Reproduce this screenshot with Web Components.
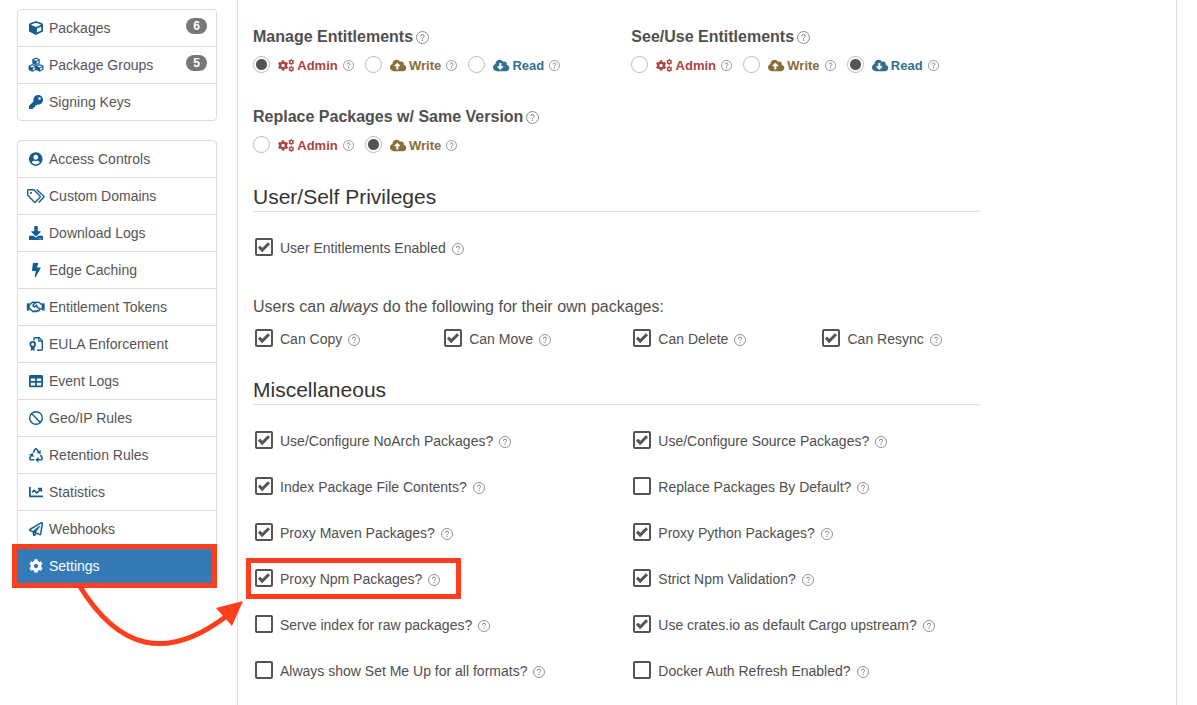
<!DOCTYPE html>
<html lang="en">
<head>
<meta charset="utf-8">
<title>Repository Settings</title>
<style>
  body { margin: 0; background: #fff; color: #4f4f4f; font-family: "Liberation Sans", Arial, sans-serif; font-size: 14px; }
</style>
</head>
<body>
<settings-page>
  <nav-group slot="sidebar">
    <nav-item icon="cube" badge="6">Packages</nav-item>
    <nav-item icon="cubes" badge="5">Package Groups</nav-item>
    <nav-item icon="key">Signing Keys</nav-item>
  </nav-group>
  <nav-group slot="sidebar">
    <nav-item icon="user">Access Controls</nav-item>
    <nav-item icon="tags">Custom Domains</nav-item>
    <nav-item icon="download">Download Logs</nav-item>
    <nav-item icon="bolt">Edge Caching</nav-item>
    <nav-item icon="handshake">Entitlement Tokens</nav-item>
    <nav-item icon="certificate">EULA Enforcement</nav-item>
    <nav-item icon="table">Event Logs</nav-item>
    <nav-item icon="ban">Geo/IP Rules</nav-item>
    <nav-item icon="recycle">Retention Rules</nav-item>
    <nav-item icon="chart">Statistics</nav-item>
    <nav-item icon="plane">Webhooks</nav-item>
    <nav-item icon="cog" active>Settings</nav-item>
  </nav-group>

  <form-grid cols="2" class="roles">
    <role-field name="manage" roles="admin write read" value="admin">Manage Entitlements</role-field>
    <role-field name="use" roles="admin write read" value="read">See/Use Entitlements</role-field>
    <role-field name="replace" roles="admin write" value="write">Replace Packages w/ Same Version</role-field>
  </form-grid>

  <form-section>
    <span slot="title">User/Self Privileges</span>
    <check-field checked>User Entitlements Enabled</check-field>
    <p slot="note">Users can <em>always</em> do the following for their own packages:</p>
    <form-grid cols="4" slot="more">
      <check-field checked>Can Copy</check-field>
      <check-field checked>Can Move</check-field>
      <check-field checked>Can Delete</check-field>
      <check-field checked>Can Resync</check-field>
    </form-grid>
  </form-section>

  <form-section>
    <span slot="title">Miscellaneous</span>
    <form-grid cols="2">
      <check-field checked>Use/Configure NoArch Packages?</check-field>
      <check-field checked>Use/Configure Source Packages?</check-field>
      <check-field checked>Index Package File Contents?</check-field>
      <check-field>Replace Packages By Default?</check-field>
      <check-field checked>Proxy Maven Packages?</check-field>
      <check-field checked>Proxy Python Packages?</check-field>
      <check-field checked marked>Proxy Npm Packages?</check-field>
      <check-field checked>Strict Npm Validation?</check-field>
      <check-field>Serve index for raw packages?</check-field>
      <check-field checked>Use crates.io as default Cargo upstream?</check-field>
      <check-field>Always show Set Me Up for all formats?</check-field>
      <check-field>Docker Auth Refresh Enabled?</check-field>
    </form-grid>
  </form-section>
</settings-page>

<script>
const CUBE = 'M239.1 6.3l-208 78c-18.7 7-31.1 25-31.1 45v225.1c0 18.2 10.3 34.8 26.5 42.9l208 104c13.5 6.8 29.4 6.8 42.9 0l208-104c16.3-8.1 26.5-24.8 26.5-42.9V129.3c0-20-12.4-37.9-31.1-44.9l-208-78C262 2.2 250 2.2 239.1 6.3zM256 68.4l192 72v1.1l-192 78-192-78v-1.1l192-72zm32 356V275.5l160-65v133.9l-160 80z';
const COG = 'M487.4 315.7l-42.6-24.6c4.3-23.2 4.3-47 0-70.2l42.6-24.6c4.9-2.8 7.1-8.6 5.5-14-11.1-35.6-30-67.8-54.7-94.6-3.8-4.1-10-5.1-14.8-2.3L380.8 110c-17.9-15.4-38.5-27.3-60.8-35.1V25.8c0-5.6-3.9-10.5-9.4-11.7-36.7-8.2-74.3-7.8-109.2 0-5.5 1.2-9.4 6.1-9.4 11.7V75c-22.2 7.9-42.8 19.8-60.8 35.1L88.7 85.5c-4.9-2.8-11-1.9-14.8 2.3-24.7 26.7-43.6 58.9-54.7 94.6-1.7 5.4.6 11.2 5.5 14L67.3 221c-4.3 23.2-4.3 47 0 70.2l-42.6 24.6c-4.9 2.8-7.1 8.6-5.5 14 11.1 35.6 30 67.8 54.7 94.6 3.8 4.1 10 5.1 14.8 2.3l42.6-24.6c17.9 15.4 38.5 27.3 60.8 35.1v49.2c0 5.6 3.9 10.5 9.4 11.7 36.7 8.2 74.3 7.8 109.2 0 5.5-1.2 9.4-6.1 9.4-11.7v-49.2c22.2-7.9 42.8-19.8 60.8-35.1l42.6 24.6c4.9 2.8 11 1.9 14.8-2.3 24.7-26.7 43.6-58.9 54.7-94.6 1.5-5.5-.7-11.3-5.6-14.1zM256 336c-44.1 0-80-35.9-80-80s35.9-80 80-80 80 35.9 80 80-35.9 80-80 80z';
const CLOUD = 'M537.6 226.6c4.1-10.7 6.4-22.4 6.4-34.6 0-53-43-96-96-96-19.7 0-38.1 6-53.3 16.2C367 64.2 315.3 32 256 32c-88.4 0-160 71.6-160 160 0 2.7.1 5.4.2 8.1C40.2 219.8 0 273.2 0 336c0 79.5 64.5 144 144 144h368c70.7 0 128-57.3 128-128 0-61.9-44-113.6-102.4-125.4z';
const p = d => `<path d="${d}"/>`;
const line = (d, w) => `<path d="${d}" fill="none" stroke="currentColor" stroke-width="${w}" stroke-linejoin="round"/>`;

/* name: [viewBox width, viewBox height, markup] */
const ICONS = {
  cube: [512, 512, p(CUBE)],
  cubes: [512, 512, `<g stroke="currentColor" stroke-width="14"><g transform="translate(122 -8) scale(.53)">${p(CUBE)}</g><g transform="translate(-12 228) scale(.53)">${p(CUBE)}</g><g transform="translate(254 228) scale(.53)">${p(CUBE)}</g></g>`],
  key: [512, 512, p('M512 176C512 273.2 433.2 352 336 352c-11.2 0-22.2-1-32.8-3l-24 27a24 24 0 0 1-18 8H224v40c0 13.3-10.7 24-24 24h-40v40c0 13.3-10.7 24-24 24H24c-13.3 0-24-10.7-24-24v-78c0-6.4 2.5-12.5 7-17l161.8-161.8C163.1 213.8 160 195.3 160 176 160 78.8 238.8 0 336 0 433.5 0 512 78.5 512 176zM336 128c0 26.5 21.5 48 48 48s48-21.5 48-48-21.5-48-48-48-48 21.5-48 48z')],
  user: [496, 512, p('M248 8C111 8 0 119 0 256s111 248 248 248 248-111 248-248S385 8 248 8zm0 96c48.6 0 88 39.4 88 88s-39.4 88-88 88-88-39.4-88-88 39.4-88 88-88zm0 344c-58.7 0-111.3-26.6-146.5-68.2 18.8-35.4 55.6-59.8 98.5-59.8 2.4 0 4.8.4 7.1 1.1 13 4.2 26.6 6.9 40.9 6.9 14.3 0 28-2.7 40.9-6.9 2.3-.7 4.7-1.1 7.1-1.1 42.9 0 79.7 24.4 98.5 59.8C359.3 421.4 306.7 448 248 448z')],
  tags: [18, 14, line('M.7 1.7V6L7.2 12.9q.6.6 1.2 0L13 8.2q.6-.6 0-1.2L6.8.7H1.7q-1 0-1 1z', 1.4) + line('M9.6.4L16.7 7q.6.6 0 1.2l-5 5.3', 1.4) + '<circle cx="4" cy="4" r="1.1"/>'],
  download: [512, 512, p('M216 0h80c13.3 0 24 10.7 24 24v168h87.7c17.8 0 26.7 21.5 14.1 34.1L269.7 378.3c-7.5 7.5-19.8 7.5-27.3 0L90.1 226.1c-12.6-12.6-3.7-34.1 14.1-34.1H192V24c0-13.3 10.7-24 24-24zm296 376v112c0 13.3-10.7 24-24 24H24c-13.3 0-24-10.7-24-24V376c0-13.3 10.7-24 24-24h146.7l49 49c20.1 20.1 52.5 20.1 72.6 0l49-49H488c13.3 0 24 10.7 24 24zm-124 88c0-11-9-20-20-20s-20 9-20 20 9 20 20 20 20-9 20-20zm64 0c0-11-9-20-20-20s-20 9-20 20 9 20 20 20 20-9 20-20z')],
  bolt: [320, 512, p('M296 160H180.6l42.6-129.8C227.2 15 215.7 0 200 0H56C44 0 33.8 8.9 32.2 20.8l-32 240C-1.7 275.2 9.5 288 24 288h118.7L96.6 482.5c-3.6 15.2 8 29.5 23.3 29.5 8.4 0 16.4-4.4 20.8-12l176-304c9.3-15.9-2.2-36-20.7-36z')],
  handshake: [640, 512, `<g stroke="currentColor" stroke-width="10">${p('M519.2 127.9l-47.6-47.6A56.3 56.3 0 0 0 432 64H205.2c-14.8 0-29.1 5.9-39.6 16.3L118 127.9H0v255.7h64c17.6 0 31.8-14.2 31.9-31.7h9.1l84.6 76.4c30.9 25.1 73.8 25.7 105.6 3.8 12.5 10.8 26 15.9 41.1 15.9 18.2 0 35.3-7.4 48.8-24 22.1 8.7 48.2 2.6 64-16.8l26.2-32.3c5.6-6.9 9.1-14.8 10.9-23h57.9c.1 17.5 14.4 31.7 31.9 31.7h64V127.9H519.2zM48 351.6c-8.8 0-16-7.2-16-16s7.2-16 16-16 16 7.2 16 16c0 8.9-7.2 16-16 16zm390-6.9l-26.1 32.2c-2.8 3.4-7.8 4-11.3 1.2l-23.9-19.4-30 36.5c-6 7.3-15 4.8-18 2.4l-36.8-31.5-15.6 19.2c-13.9 17.1-39.2 19.7-55.3 6.6l-97.3-88H96V175.8h41.9l61.7-61.6c2-.8 3.7-1.5 5.7-2.3H262l-38.7 35.5c-29.4 26.9-31.1 72.3-4.4 101.3 14.8 16.2 61.2 41.2 101.5 4.4l8.2-7.5 108.2 87.8c3.4 2.8 3.9 7.9 1.2 11.3zm106-40.8h-69.2c-2.3-2.8-4.9-5.4-7.7-7.7l-102.7-83.4 12.5-11.4c6.5-6 7-16.1 1-22.6L367 167.1c-6-6.5-16.1-6.9-22.6-1l-55.2 50.6c-9.5 8.7-25.7 9.4-34.6 0-9.3-9.9-8.5-25.1 1.2-33.9l65.6-60.2c7.4-6.8 17-10.5 27-10.5l83.7-.2c2.1 0 4.1.8 5.5 2.3l61.7 61.6H544v128zm48 47.7c-8.8 0-16-7.2-16-16s7.2-16 16-16 16 7.2 16 16c0 8.9-7.2 16-16 16z')}</g>`],
  certificate: [14, 14, line('M5 3.4V1.7q0-1 1-1h4l3.3 3.3v8.3q0 1-1 1H8', 1.4) + line('M9.7.7v3.5h3.6', 1.2) + line('M6.1 7.3a2.4 2.4 0 1 1-4.8 0a2.4 2.4 0 1 1 4.8 0z', 1.8) + p('M1.9 9.6h3.6V14l-1.8-1-1.8 1z')],
  table: [512, 512, p('M464 32H48C21.5 32 0 53.5 0 80v352c0 26.5 21.5 48 48 48h416c26.5 0 48-21.5 48-48V80c0-26.5-21.5-48-48-48zM224 416H64v-96h160v96zm0-160H64v-96h160v96zm224 160H288v-96h160v96zm0-160H288v-96h160v96z')],
  ban: [14, 14, line('M13.3 7A6.3 6.3 0 1 1 .7 7a6.3 6.3 0 1 1 12.6 0zM2.6 2.6l8.8 8.8', 1.4)],
  recycle: [14, 14, line('M4.2 4.6L6 1.4q1-1.3 2 0L9.8 4.4', 1.6) + p('M11.7 1.9v4.2L7.7 5z') + line('M11.4 7l1.6 2.6q.6 2-1.2 2.2H9', 1.6) + p('M9.5 8.9v5.6L6.3 11.7z') + line('M5.4 11.8H2.2Q.3 11.6 1 9.6l1.5-2.5', 1.6) + p('M-.2 6.5L3.9 5.3l1 3.9z')],
  chart: [512, 512, p('M496 384H64V80c0-8.8-7.2-16-16-16H16C7.2 64 0 71.2 0 80v336c0 17.7 14.3 32 32 32h464c8.8 0 16-7.2 16-16v-32c0-8.8-7.2-16-16-16zM464 96H345.9c-21.4 0-32.1 25.9-17 41l32.4 32.4L288 242.8l-73.4-73.4c-12.5-12.5-32.8-12.5-45.2 0l-68.7 68.7c-6.3 6.2-6.3 16.4 0 22.6l22.6 22.6c6.3 6.3 16.4 6.3 22.6 0L192 237.3l73.4 73.4c12.5 12.5 32.8 12.5 45.2 0l96-96 32.4 32.4c15.1 15.1 41 4.4 41-17V112c0-8.8-7.2-16-16-16z')],
  plane: [512, 512, `<g stroke="currentColor" stroke-width="10">${p('M440 6.5L24 246.4c-34.4 19.9-31.1 70.8 5.7 85.9L144 379.6V464c0 46.4 59.2 65.5 86.6 28.6l43.8-59.1 111.9 46.2c5.9 2.4 12.1 3.6 18.3 3.6 8.2 0 16.3-2.1 23.6-6.2 12.8-7.2 21.6-20 23.9-34.5l59.4-387.2c6.1-40.1-36.9-68.8-71.5-48.9zM192 464v-64.6l36.6 15.1L192 464zm212.6-28.7l-153.8-63.5L391 169.5c10.7-15.5-9.5-33.5-23.7-21.2L155.8 332.6 48 288 464 48l-59.4 387.3z')}</g>`],
  cog: [512, 512, p(COG)],
  cogs: [640, 512, `<g transform="translate(-10 46) scale(.82)">${p(COG)}</g><g transform="translate(404 0) scale(.46)">${p(COG)}</g><g transform="translate(404 276) scale(.46)">${p(COG)}</g>`],
  upload: [640, 512, `<path fill-rule="evenodd" d="${CLOUD}M393.4 288H328v112c0 8.8-7.2 16-16 16h-48c-8.8 0-16-7.2-16-16V288h-65.4c-14.3 0-21.4-17.2-11.3-27.3l105.4-105.4c6.2-6.2 16.4-6.2 22.6 0l105.4 105.4c10.1 10.1 2.9 27.3-11.3 27.3z"/>`],
  clouddown: [640, 512, `<path fill-rule="evenodd" d="${CLOUD}M404.7 315.3L299.3 420.7c-6.2 6.2-16.4 6.2-22.6 0L171.3 315.3c-10.1-10.1-2.9-27.3 11.3-27.3H248V176c0-8.8 7.2-16 16-16h48c8.8 0 16 7.2 16 16v112h65.4c14.2 0 21.4 17.2 11.3 27.3z"/>`],
  help: [12, 12, line('M11.5 6A5.5 5.5 0 1 1 .5 6a5.5 5.5 0 1 1 11 0z', .8) + line('M4.4 4.8q0-1.6 1.6-1.6t1.6 1.4q0 .8-.8 1.3t-.8 1.3', .9) + '<circle cx="6" cy="8.6" r=".65"/>']
};

function define(name, render) {
  customElements.define(name, class extends HTMLElement {
    connectedCallback() {
      if (this.shadowRoot) return;
      this.attachShadow({ mode: 'open' }).innerHTML = render(this);
    }
  });
}

define('ui-icon', el => {
  const [w, h, body] = ICONS[el.getAttribute('name')];
  return `<style>
    :host { display: inline-flex; flex: none; height: 14px; justify-content: center; }
    svg { display: block; height: 100%; fill: currentColor; overflow: visible; }
  </style><svg viewBox="0 0 ${w} ${h}" aria-hidden="true">${body}</svg>`;
});

define('settings-page', () => `<style>
    :host { display: flex; min-height: 100vh; gap: 20px; padding: 0 20px 0 17px; box-sizing: border-box; }
    nav { flex: none; width: 200px; padding-top: 9px; display: flex; flex-direction: column; gap: 19px; }
    main { flex: 1; min-width: 0; padding: 26px 15px 24px; border: solid #ddd; border-width: 0 1px; }
    form { width: calc(100% * 10 / 12); }
  </style>
  <nav><slot name="sidebar"></slot></nav>
  <main><form><slot></slot></form></main>`);

define('nav-group', () => `<style>
    :host { display: flex; flex-direction: column; border: 1px solid #ddd; border-radius: 4px; }
    ::slotted(nav-item:not(:first-child)) { border-top: 1px solid #ddd; }
  </style><slot></slot>`);

define('nav-item', el => {
  const badge = el.getAttribute('badge');
  const active = el.hasAttribute('active');
  return `<style>
    :host { display: block; position: relative; }
    a { display: flex; align-items: center; gap: 4px; height: 36px; padding: 0 9px; color: #555; text-decoration: none; font-size: 14px; line-height: 20px; }
    ui-icon { width: 18px; color: #135e91; }
    .badge { align-self: flex-start; margin: 8px 0 0 auto; min-width: 21px; box-sizing: border-box; border-radius: 8px; background: #777; color: #fff; font-size: 12px; font-weight: bold; line-height: 16px; text-align: center; }
    :host([active]) a, :host([active]) ui-icon { color: #fff; }
    :host([active]) a { margin: 0 -1px; padding: 0 10px; background: #337ab7; }
    .frame { position: absolute; inset: -4px -1px -4px -6px; border: 5px solid #ff3e1d; pointer-events: none; }
    .arrow { position: absolute; left: 60px; top: 36px; width: 170px; height: 70px; overflow: visible; pointer-events: none; }
  </style>
  <a href="#"><ui-icon name="${el.getAttribute('icon')}"></ui-icon><slot></slot>${badge ? `<span class="badge">${badge}</span>` : ''}</a>
  ${active ? `<svg class="arrow" viewBox="0 0 170 70" aria-hidden="true"><path d="M1 1C40 65 88 79 150 31" fill="none" stroke="#ff3e1d" stroke-width="5"/><path d="M165 17L138 24L154 42z" fill="#ff3e1d"/></svg><div class="frame"></div>` : ''}`;
});

define('form-grid', el => `<style>
    :host { display: grid; grid-template-columns: repeat(${el.getAttribute('cols')}, minmax(0, 1fr)); row-gap: 26px; }
    :host(.roles) { row-gap: 33px; }
  </style><slot></slot>`);

define('form-section', () => `<style>
    :host { display: block; padding-top: 32px; }
    :host(:last-child) { padding-top: 29px; }
    h2 { margin: 0 30px 26px 0; padding-bottom: 2px; border-bottom: 1px solid #ddd; color: #333; font-size: 21px; font-weight: normal; line-height: 24px; }
    ::slotted(p) { margin: 38px 0 11px; font-size: 16px; line-height: 22px; }
  </style>
  <h2><slot name="title"></slot></h2><slot></slot><slot name="note"></slot><slot name="more"></slot>`);

define('role-field', el => {
  const kinds = { admin: ['Admin', 'cogs'], write: ['Write', 'upload'], read: ['Read', 'clouddown'] };
  const rows = el.getAttribute('roles').split(' ').map(r => `
    <label class="${r}"><input type="radio" name="${el.getAttribute('name')}" value="${r}"${r === el.getAttribute('value') ? ' checked' : ''}>
    <ui-icon name="${kinds[r][1]}"></ui-icon><span>${kinds[r][0]}</span><ui-icon class="help" name="help"></ui-icon></label>`).join('');
  return `<style>
    :host { display: block; }
    fieldset { margin: 0; padding: 0; border: 0; min-width: 0; }
    legend { display: flex; align-items: center; gap: 3px; padding: 0; margin-bottom: 8px; font-size: 16px; font-weight: bold; line-height: 22px; }
    legend ui-icon { height: 13px; color: #777; }
    .row { display: flex; gap: 11px; }
    label { display: flex; align-items: flex-start; font-size: 13px; font-weight: bold; line-height: 19px; height: 17px; }
    input { appearance: none; flex: none; width: 17px; height: 17px; margin: 0 8px 0 0; border: 1px solid #bbb; border-radius: 50%; background: #fff; }
    input:checked { background: radial-gradient(circle, #555 5px, transparent 6px); }
    label ui-icon { height: 13px; margin-top: 3px; }
    span { margin: 0 5px 0 3px; }
    label .help { height: 11px; margin-top: 4px; color: #777; }
    .admin { color: #a94442; } .write { color: #8a6d3b; } .read { color: #31708f; }
  </style>
  <fieldset><legend><slot></slot><ui-icon name="help"></ui-icon></legend><div class="row">${rows}</div></fieldset>`;
});

define('check-field', el => `<style>
    :host { display: flex; }
    label { position: relative; display: flex; align-items: flex-start; padding-left: 2px; font-size: 14px; line-height: 20px; }
    .box { display: grid; flex: none; width: 18px; height: 18px; margin-right: 7px; }
    input { appearance: none; grid-area: 1 / 1; margin: 0; border: 2px solid #555; border-radius: 2px; background: #fff; }
    svg { grid-area: 1 / 1; width: 18px; height: 18px; fill: none; stroke: #555; stroke-width: 3; pointer-events: none; }
    input:not(:checked) + svg { visibility: hidden; }
    ui-icon { height: 12px; margin: 5px 0 0 6px; color: #777; }
    .frame { position: absolute; inset: -11px -21px -10px -7px; border: 5px solid #ff3e1d; pointer-events: none; }
  </style>
  <label><span class="box"><input type="checkbox"${el.hasAttribute('checked') ? ' checked' : ''}><svg viewBox="0 0 18 18" aria-hidden="true"><path d="M4 8.6l3.2 3.4L14 5.2"/></svg></span><span><slot></slot></span><ui-icon name="help"></ui-icon>${el.hasAttribute('marked') ? '<span class="frame"></span>' : ''}</label>`);
</script>
</body>
</html>
